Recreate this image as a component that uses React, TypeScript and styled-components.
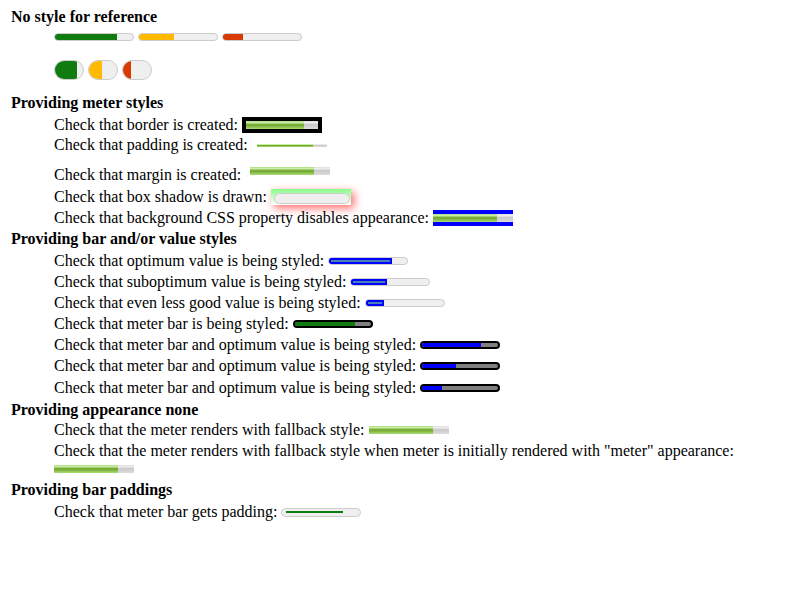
import React from "react";
import styled, { createGlobalStyle } from "styled-components";

const GlobalStyle = createGlobalStyle`
  html, body { background: #fff; }
  body {
    margin: 0;
    font-family: "Liberation Serif", "Times New Roman", serif;
    font-size: 16px;
    color: #000;
  }
`;

const Page = styled.div`
  display: flex;
  flex-direction: column;
  padding: 7px 0 0 11px;
`;

const Heading = styled.div<{ $mt?: number }>`
  display: flex;
  align-items: center;
  height: 20px;
  margin-top: ${(p) => p.$mt ?? 0}px;
  font-weight: bold;
  white-space: nowrap;
`;

const Row = styled.div<{ $mt?: number; $h?: number }>`
  display: flex;
  align-items: center;
  gap: 4px;
  height: ${(p) => p.$h ?? 20}px;
  margin-top: ${(p) => p.$mt ?? 0}px;
  padding-left: 43px;
  white-space: nowrap;
`;

const Label = styled.span`
  line-height: 20px;
`;

/* native-looking meter */
const NativeTrack = styled.div<{ $w: number; $h: number }>`
  box-sizing: border-box;
  width: ${(p) => p.$w}px;
  height: ${(p) => p.$h}px;
  border: 1px solid #cccccc;
  border-radius: ${(p) => p.$h / 2}px;
  background: #efefef;
  overflow: hidden;
  display: flex;
  flex-shrink: 0;
`;

const NativeFill = styled.div<{ $color: string }>`
  height: 100%;
  background: ${(p) => p.$color};
`;

/* fallback (appearance: none) meter */
const FallbackBar = styled.div<{ $w: number; $h: number }>`
  width: ${(p) => p.$w}px;
  height: ${(p) => p.$h}px;
  background: linear-gradient(to bottom, #ddd, #eee 20%, #ccc 45%, #ccc 55%, #ddd);
  display: flex;
  flex-shrink: 0;
`;

const FallbackValue = styled.div`
  height: 100%;
  background: linear-gradient(to bottom, #ad7, #cea 20%, #7a3 45%, #7a3 55%, #ad7);
`;

const BorderedMeter = styled.div`
  width: 80px;
  height: 16px;
  box-sizing: border-box;
  border: 4px solid #000;
  display: flex;
  flex-shrink: 0;
`;

const PaddedMeter = styled.div`
  width: 80px;
  height: 16px;
  box-sizing: border-box;
  padding: 5px;
  display: flex;
  align-items: center;
  flex-shrink: 0;
`;

const MarginMeter = styled.div`
  align-self: flex-start;
  margin: 2px 0 0 5px;
  display: flex;
`;

const ShadowMeter = styled.div`
  width: 80px;
  height: 16px;
  box-sizing: border-box;
  padding: 4px 1px 1px 3px;
  background: linear-gradient(to bottom, #8f8, #fff);
  box-shadow: 3px 3px 8px rgba(255, 40, 40, 0.7);
  display: flex;
  flex-shrink: 0;
`;

const BlueMeter = styled.div`
  width: 80px;
  height: 16px;
  box-sizing: border-box;
  padding: 4px 0;
  background: #00f;
  display: flex;
  flex-shrink: 0;
`;

const ValueBox = styled.div`
  box-sizing: border-box;
  height: 100%;
  border: 2px solid #00f;
  background: #4682b4;
`;

const DarkTrack = styled.div`
  box-sizing: border-box;
  width: 80px;
  height: 8px;
  border: 2px solid #000;
  border-radius: 4px;
  background: #808080;
  overflow: hidden;
  display: flex;
  flex-shrink: 0;
`;

const DarkFill = styled.div<{ $color: string }>`
  height: 100%;
  background: ${(p) => p.$color};
`;

const PadTrack = styled.div`
  box-sizing: border-box;
  width: 80px;
  height: 9px;
  border: 1px solid #cccccc;
  border-radius: 5px;
  background: #efefef;
  padding: 0 4px;
  display: flex;
  align-items: center;
  flex-shrink: 0;
`;

const PadFill = styled.div`
  height: 2px;
  background: #107c10;
`;

const MeterLine = styled.div<{ $mt: number; $h: number }>`
  display: flex;
  gap: 4px;
  padding-left: 43px;
  height: ${(p) => p.$h}px;
  margin-top: ${(p) => p.$mt}px;
  align-items: center;
`;

const GREEN = "#107c10";
const YELLOW = "#ffb900";
const RED = "#d83b01";

const Native = ({ w, h, v, color }: { w: number; h: number; v: number; color: string }) => (
  <NativeTrack $w={w} $h={h}>
    <NativeFill $color={color} style={{ width: `${v * 100}%` }} />
  </NativeTrack>
);

const Fallback = ({ w, h, v }: { w: number; h: number; v: number }) => (
  <FallbackBar $w={w} $h={h}>
    <FallbackValue style={{ width: `${v * 100}%` }} />
  </FallbackBar>
);

const Optimum = ({ v }: { v: number }) => (
  <NativeTrack $w={80} $h={8}>
    <ValueBox style={{ width: `${v * 100}%` }} />
  </NativeTrack>
);

const Dark = ({ v, color }: { v: number; color: string }) => (
  <DarkTrack>
    <DarkFill $color={color} style={{ width: `${v * 100}%` }} />
  </DarkTrack>
);

export default function App() {
  return (
    <>
      <GlobalStyle />
      <Page>
        <Heading>No style for reference</Heading>
        <MeterLine $mt={6} $h={8}>
          <Native w={80} h={8} v={0.8} color={GREEN} />
          <Native w={80} h={8} v={0.45} color={YELLOW} />
          <Native w={80} h={8} v={0.25} color={RED} />
        </MeterLine>
        <MeterLine $mt={19} $h={20}>
          <Native w={30} h={20} v={0.78} color={GREEN} />
          <Native w={30} h={20} v={0.45} color={YELLOW} />
          <Native w={30} h={20} v={0.3} color={RED} />
        </MeterLine>

        <Heading $mt={13}>Providing meter styles</Heading>
        <Row $mt={2}>
          <Label>Check that border is created:</Label>
          <BorderedMeter>
            <Fallback w={72} h={8} v={0.8} />
          </BorderedMeter>
        </Row>
        <Row>
          <Label>Check that padding is created:</Label>
          <PaddedMeter>
            <Fallback w={70} h={3} v={0.8} />
          </PaddedMeter>
        </Row>
        <Row $mt={10}>
          <Label>Check that margin is created:</Label>
          <MarginMeter>
            <Fallback w={80} h={8} v={0.8} />
          </MarginMeter>
        </Row>
        <Row $mt={2}>
          <Label>Check that box shadow is drawn:</Label>
          <ShadowMeter>
            <NativeTrack $w={76} $h={11} />
          </ShadowMeter>
        </Row>
        <Row $mt={1}>
          <Label>Check that background CSS property disables appearance:</Label>
          <BlueMeter>
            <Fallback w={80} h={8} v={0.8} />
          </BlueMeter>
        </Row>

        <Heading $mt={1}>Providing bar and/or value styles</Heading>
        <Row $mt={2}>
          <Label>Check that optimum value is being styled:</Label>
          <Optimum v={0.8} />
        </Row>
        <Row $mt={1}>
          <Label>Check that suboptimum value is being styled:</Label>
          <Optimum v={0.45} />
        </Row>
        <Row $mt={1}>
          <Label>Check that even less good value is being styled:</Label>
          <Optimum v={0.24} />
        </Row>
        <Row $mt={1}>
          <Label>Check that meter bar is being styled:</Label>
          <Dark v={0.79} color={GREEN} />
        </Row>
        <Row $mt={1}>
          <Label>Check that meter bar and optimum value is being styled:</Label>
          <Dark v={0.78} color="#0000ff" />
        </Row>
        <Row $mt={1}>
          <Label>Check that meter bar and optimum value is being styled:</Label>
          <Dark v={0.45} color="#0000ff" />
        </Row>
        <Row $mt={2}>
          <Label>Check that meter bar and optimum value is being styled:</Label>
          <Dark v={0.26} color="#0000ff" />
        </Row>

        <Heading $mt={2}>Providing appearance none</Heading>
        <Row>
          <Label>Check that the meter renders with fallback style:</Label>
          <Fallback w={80} h={8} v={0.8} />
        </Row>
        <Row $mt={1}>
          <Label>
            Check that the meter renders with fallback style when meter is initially rendered with "meter" appearance:
          </Label>
        </Row>
        <MeterLine $mt={4} $h={8}>
          <Fallback w={80} h={8} v={0.8} />
        </MeterLine>

        <Heading $mt={7}>Providing bar paddings</Heading>
        <Row $mt={2}>
          <Label>Check that meter bar gets padding:</Label>
          <PadTrack>
            <PadFill style={{ width: "57px" }} />
          </PadTrack>
        </Row>
      </Page>
    </>
  );
}
